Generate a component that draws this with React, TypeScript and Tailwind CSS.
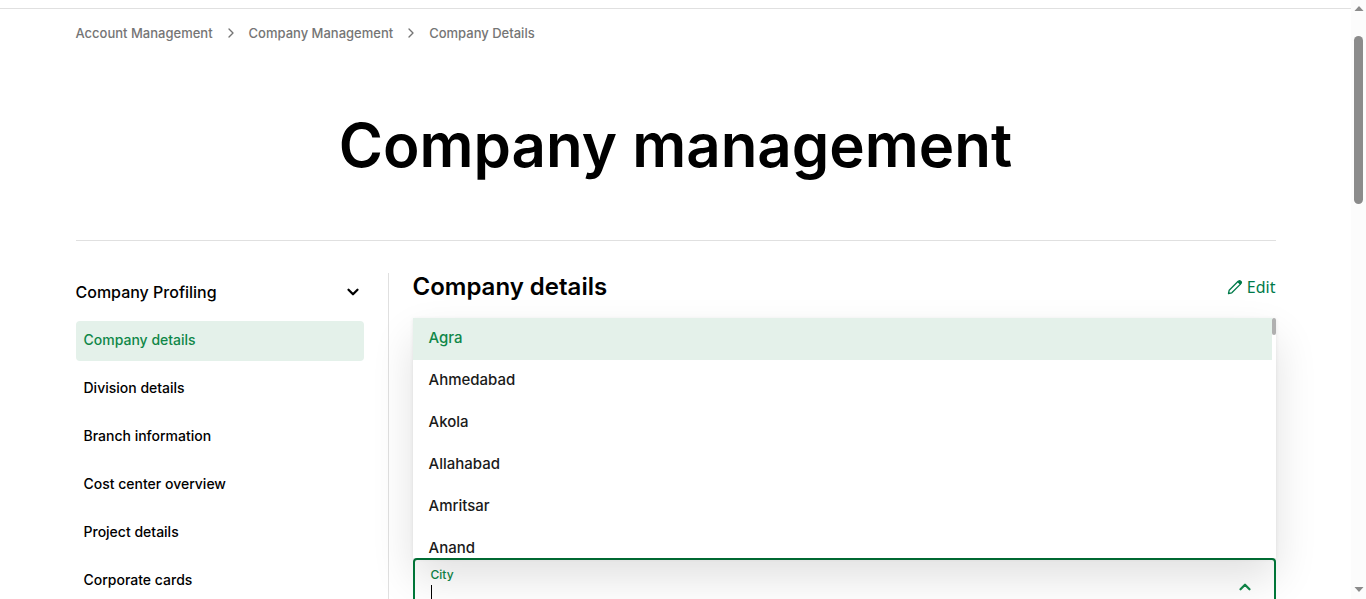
import { ChevronDown, ChevronRight, ChevronUp } from "lucide-react";

const crumbs = ["Account Management", "Company Management", "Company Details"];

const sections = [
  "Company details",
  "Division details",
  "Branch information",
  "Cost center overview",
  "Project details",
  "Corporate cards",
];

const cities = ["Agra", "Ahmedabad", "Akola", "Allahabad", "Amritsar", "Anand"];

function PencilIcon() {
  return (
    <svg width="16" height="16" viewBox="0 0 16 16" fill="none" stroke="currentColor" aria-hidden="true">
      <path d="M1.5 14.5 L2.2 11.2 L10.9 2.5 L13.5 5.1 L4.8 13.8 Z" strokeWidth="1.3" strokeLinejoin="round" />
      <path d="M10.2 2.7 L11.6 1.3 Q12.7 .5 13.8 1.4 L14.7 2.3 Q15.5 3.4 14.7 4.4 L13.3 5.8 Z" fill="currentColor" stroke="none" />
    </svg>
  );
}

function Breadcrumb() {
  return (
    <nav aria-label="Breadcrumb" className="pt-4">
      <ol className="flex items-center text-[13px] leading-4 font-medium text-[#757575]">
        {crumbs.map((crumb, i) => (
          <li key={crumb} className="flex items-center">
            {i > 0 && <ChevronRight className="mx-2.5 size-4" strokeWidth={2} aria-hidden="true" />}
            <a href="#">{crumb}</a>
          </li>
        ))}
      </ol>
    </nav>
  );
}

function Sidebar() {
  return (
    <aside className="w-[313px] shrink-0 border-r border-[#e0e0e0] pr-6">
      <button type="button" className="flex h-[38px] w-full items-center justify-between pr-0.5 text-base font-medium text-black">
        Company Profiling
        <ChevronDown className="size-[18px]" strokeWidth={3} aria-hidden="true" />
      </button>
      <ul className="mt-2.5 flex flex-col gap-2">
        {sections.map((section, i) => (
          <li key={section}>
            <a
              href="#"
              className={
                i === 0
                  ? "block h-10 rounded bg-[#e4f1ea] px-2 pt-2 text-sm leading-[22px] font-medium text-[#0f8748]"
                  : "block h-10 rounded px-2 pt-2 text-sm leading-[22px] font-medium text-black"
              }
            >
              {section}
            </a>
          </li>
        ))}
      </ul>
    </aside>
  );
}

function CityField() {
  return (
    <div className="relative mt-[257px]">
      <div className="flex h-[58px] items-center justify-between rounded-t border-2 border-[#00793a] pr-5 pl-4">
        <div className="flex h-full min-w-0 flex-1 flex-col pt-[7px]">
          <label htmlFor="city" className="block text-xs leading-4 font-medium text-[#0f8748]">
            City
          </label>
          <div className="flex items-center">
            <span className="h-5 w-px bg-black" aria-hidden="true" />
            <input id="city" type="text" className="h-6 min-w-0 flex-1 bg-transparent text-sm text-black outline-none" />
          </div>
        </div>
        <ChevronUp className="size-[18px] shrink-0 text-[#0f8748]" strokeWidth={3} aria-hidden="true" />
      </div>
      <div className="absolute inset-x-0 bottom-full flex h-60 overflow-hidden bg-white shadow-[0_1px_4px_rgba(0,0,0,0.08),0_20px_40px_rgba(0,0,0,0.12)]">
        <ul role="listbox" aria-label="City" className="flex-1">
          {cities.map((city, i) => (
            <li
              key={city}
              role="option"
              aria-selected={i === 0}
              className={
                i === 0
                  ? "h-[42px] bg-[#e4f1ea] px-4 text-[15px] leading-10 font-medium text-[#0f8748]"
                  : "h-[42px] px-4 text-[15px] leading-10 font-medium text-[#1a1a1a]"
              }
            >
              {city}
            </li>
          ))}
        </ul>
        <div className="w-1" aria-hidden="true">
          <div className="h-[17px] rounded-sm bg-[#b0b0b0]" />
        </div>
      </div>
    </div>
  );
}

function ScrollTrack() {
  return (
    <div className="flex w-[15px] shrink-0 flex-col items-center justify-between bg-[#fcfcfc] py-1" aria-hidden="true">
      <div className="flex flex-col items-center gap-6">
        <svg width="10" height="8" viewBox="0 0 10 8" fill="#8b8b8b">
          <path d="M0.5 7 L5 2 L9.5 7 Z" />
        </svg>
        <div className="h-[168px] w-[9px] rounded-full bg-[#8b8b8b]" />
      </div>
      <svg width="10" height="8" viewBox="0 0 10 8" fill="#8b8b8b">
        <path d="M0.5 0 L9.5 0 L5 5 Z" />
      </svg>
    </div>
  );
}

export default function App() {
  return (
    <div className="flex h-screen overflow-clip bg-white font-['Inter','Liberation_Sans',sans-serif]">
      <div className="min-w-0 flex-1 overflow-clip pt-2">
        <div className="border-t border-[#e0e0e0]">
          <div className="mx-auto max-w-[1200px]">
            <Breadcrumb />
            <h1 className="border-b border-[#e0e0e0] pt-16 pb-[55px] text-center text-6xl leading-[80px] font-semibold text-black">
              Company management
            </h1>
            <div className="flex pt-8">
              <Sidebar />
              <main className="min-w-0 flex-1 pl-6">
                <div className="flex h-7 items-center justify-between">
                  <h2 className="text-2xl leading-7 font-semibold text-black">Company details</h2>
                  <button type="button" className="flex items-center gap-1 font-['Noto_Sans',sans-serif] text-base leading-6 text-[#007a4a]">
                    <PencilIcon />
                    Edit
                  </button>
                </div>
                <CityField />
              </main>
            </div>
          </div>
        </div>
      </div>
      <ScrollTrack />
    </div>
  );
}
